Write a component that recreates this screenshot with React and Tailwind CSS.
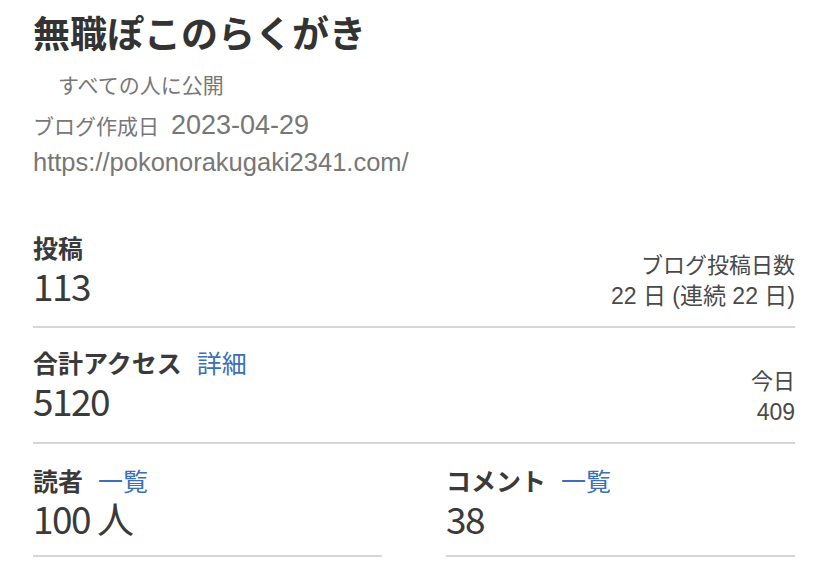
import React from 'react';

const jp = { fontFamily: '"Noto Sans CJK JP", "Noto Sans", sans-serif' };
const latin = { fontFamily: '"Liberation Sans", "Noto Sans CJK JP", sans-serif' };

function Label({ text, link }) {
  return (
    <div className="h-[30px] leading-[30px] text-[25px] font-bold text-[#3a3a3a]">
      {text}
      {link && <a className="ml-[15px] font-normal text-[#3b6fb6]">{link}</a>}
    </div>
  );
}

function Value({ children }) {
  return (
    <div className="mt-[1px] h-[44px] leading-[44px] text-[37px] tracking-[-1.5px] text-[#3a3a3a]">
      {children}
    </div>
  );
}

function Side({ top, bottom }) {
  return (
    <div style={latin} className="pb-[15px] text-right text-[#4a4a4a]">
      <div className="h-[30px] leading-[30px] text-[22px]">{top}</div>
      <div className="h-[30px] leading-[30px] text-[23px]">{bottom}</div>
    </div>
  );
}

export default function App() {
  return (
    <div style={jp} className="w-[828px] h-[584px] bg-white px-[33px] pt-[7px] overflow-hidden">
      {/* Blog header */}
      <h1 className="h-[50px] leading-[50px] text-[37px] font-bold text-[#333]">無職ぽこのらくがき</h1>
      <div className="text-[21px] text-[#777]">
        <div className="mt-[9px] pl-[25px] h-[36px] leading-[36px]">すべての人に公開</div>
        <div className="mt-[5px] h-[36px] leading-[36px]">
          ブログ作成日<span style={latin} className="ml-[12px] text-[27px]">2023-04-29</span>
        </div>
        <div style={latin} className="mt-[1px] h-[36px] leading-[36px] text-[25.5px]">
          https://pokonorakugaki2341.com/
        </div>
      </div>

      {/* Stats */}
      <div className="mt-[52px]">
        <div className="flex items-end justify-between border-b-2 border-[#d6d6d6]">
          <div className="pb-[19px]">
            <Label text="投稿" />
            <Value>113</Value>
          </div>
          <Side top="ブログ投稿日数" bottom="22 日 (連続 22 日)" />
        </div>

        <div className="flex items-end justify-between border-b-2 border-[#d6d6d6] pt-[19px]">
          <div className="pb-[20px]">
            <Label text="合計アクセス" link="詳細" />
            <Value>5120</Value>
          </div>
          <Side top="今日" bottom="409" />
        </div>

        <div className="grid grid-cols-2 gap-[64px] pt-[21px]">
          <div className="border-b-2 border-[#d6d6d6] pb-[15px]">
            <Label text="読者" link="一覧" />
            <Value>100 人</Value>
          </div>
          <div className="border-b-2 border-[#d6d6d6] pb-[15px]">
            <Label text="コメント" link="一覧" />
            <Value>38</Value>
          </div>
        </div>
      </div>
    </div>
  );
}
